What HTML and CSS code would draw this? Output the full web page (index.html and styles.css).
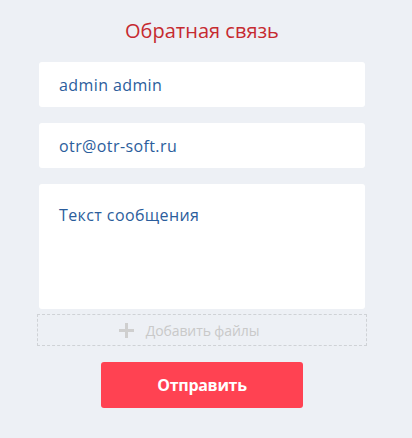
FILE: index.html
```html
<!DOCTYPE html>
<html lang="ru">
<head>
    <meta charset="UTF-8">
    <meta name="viewport" content="width=device-width, initial-scale=1.0">
    <title>Обратная связь</title>
    <link rel="stylesheet" href="styles.css">
</head>
<body>
    <form class="feedback">
        <h2 class="feedback-title">Обратная связь</h2>
        <input class="field" type="text" value="admin admin">
        <input class="field" type="email" value="otr@otr-soft.ru">
        <textarea class="field message" placeholder="Текст сообщения"></textarea>
        <label class="attach">
            <svg class="attach-icon" width="15" height="15" viewBox="0 0 15 15">
                <rect x="6" y="0" width="3" height="15" fill="#cfcfcf"/>
                <rect x="0" y="6" width="15" height="3" fill="#cfcfcf"/>
            </svg>
            <span>Добавить файлы</span>
        </label>
        <button type="submit" class="send">Отправить</button>
    </form>
</body>
</html>
```

FILE: styles.css
```css
body {
    margin: 0;
    background-color: #edf0f5;
    font-family: 'Open Sans', Arial, sans-serif;
}

.feedback {
    width: 330px;
    margin: 0 0 0 37px;
    padding-top: 18px;
    display: flex;
    flex-direction: column;
    align-items: center;
}

.feedback-title {
    margin: 0 0 18px;
    font-size: 20px;
    font-weight: normal;
    color: #c62a30;
    line-height: 26px;
}

.field {
    box-sizing: border-box;
    width: 326px;
    height: 45px;
    margin-bottom: 16px;
    padding: 0 20px;
    border: none;
    border-radius: 3px;
    background: #ffffff;
    font-family: 'Open Sans', Arial, sans-serif;
    font-size: 16px;
    letter-spacing: 0.4px;
    color: #2b5d9c;
    outline: none;
}

.message {
    height: 125px;
    margin-bottom: 5px;
    padding-top: 20px;
    resize: none;
}

.message::placeholder {
    color: #2b5d9c;
    opacity: 1;
}

.attach {
    box-sizing: border-box;
    width: 330px;
    height: 32px;
    padding-right: 26px;
    border: 1px dashed #cfd2d6;
    display: flex;
    align-items: center;
    justify-content: center;
    gap: 12px;
    font-size: 14px;
    letter-spacing: -0.1px;
    color: #c9c9c9;
    cursor: pointer;
}

.send {
    width: 202px;
    height: 46px;
    margin-top: 16px;
    border: none;
    border-radius: 3px;
    background-color: #ff4252;
    color: #ffffff;
    font-family: 'Open Sans', Arial, sans-serif;
    font-size: 16px;
    font-weight: bold;
    letter-spacing: -0.3px;
    cursor: pointer;
}
```
